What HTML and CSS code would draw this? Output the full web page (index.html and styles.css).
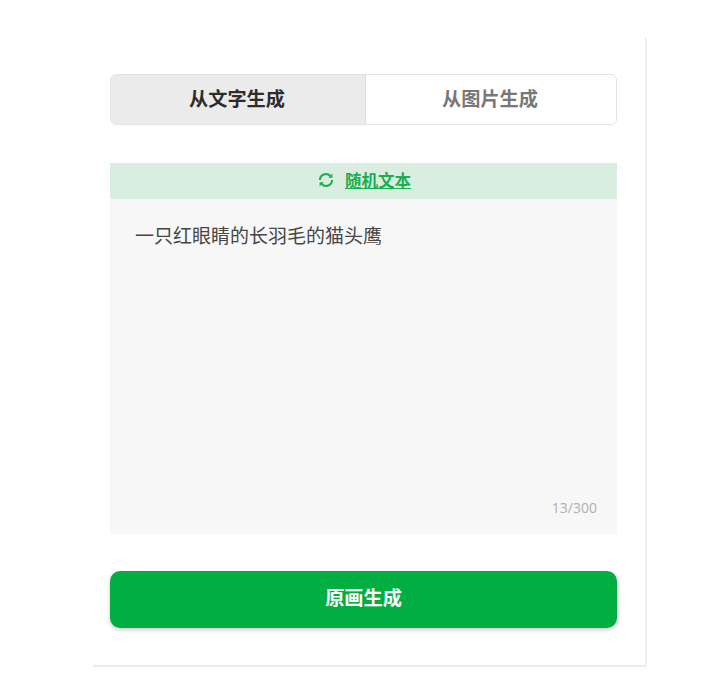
FILE: index.html
```html
<!DOCTYPE html>
<html lang="zh-CN">
<head>
    <meta charset="UTF-8">
    <meta name="viewport" content="width=device-width, initial-scale=1.0">
    <title>原画生成</title>
    <link rel="stylesheet" href="styles.css">
</head>
<body>
    <div class="panel">
        <!-- Source tabs -->
        <div class="tabs">
            <button class="tab tab-active">从文字生成</button>
            <button class="tab">从图片生成</button>
        </div>

        <!-- Prompt box -->
        <div class="prompt">
            <div class="prompt-bar">
                <svg class="refresh-icon" width="16" height="16" viewBox="0 0 16 16" fill="none" stroke="currentColor" stroke-width="2">
                    <path d="M1.9 8a6 6 0 0 1 10.4-4"/>
                    <path d="M14.1 8a6 6 0 0 1-10.4 4"/>
                    <path d="M14.4 1.6v4.2h-4.2z" fill="currentColor" stroke="none"/>
                    <path d="M1.6 14.4v-4.2h4.2z" fill="currentColor" stroke="none"/>
                </svg>
                <a class="random-link" href="#">随机文本</a>
            </div>
            <div class="prompt-body">
                <p class="prompt-text">一只红眼睛的长羽毛的猫头鹰</p>
                <span class="prompt-count">13/300</span>
            </div>
        </div>

        <button class="generate">原画生成</button>
    </div>
</body>
</html>
```

FILE: styles.css
```css
* {
    margin: 0;
    padding: 0;
    box-sizing: border-box;
    font-family: "Open Sans", "Noto Sans CJK SC", sans-serif;
}

body {
    background-color: white;
    min-height: 100vh;
}

.panel {
    width: 554px;
    height: 629px;
    margin: 38px 0 0 93px;
    padding: 36px 28px 0 17px;
    border-right: 2px solid rgb(240, 240, 240);
    border-bottom: 2px solid rgb(235, 235, 235);
}

.tabs {
    display: flex;
    height: 51px;
    border: 1px solid rgb(228, 228, 228);
    border-radius: 6px;
    overflow: hidden;
}

.tab {
    flex: 1;
    padding: 0 2px 4px 0;
    border: none;
    background: white;
    font-size: 19.2px;
    font-weight: 700;
    color: rgb(120, 120, 120);
}

.tab-active {
    flex: none;
    width: 255px;
    background-color: rgb(235, 235, 235);
    color: rgb(45, 45, 45);
    border-right: 1px solid rgb(220, 220, 220);
}

.prompt {
    margin-top: 38px;
    height: 371px;
    display: flex;
    flex-direction: column;
    background-color: rgb(247, 247, 247);
}

.prompt-bar {
    display: flex;
    align-items: center;
    justify-content: center;
    gap: 11px;
    height: 36px;
    padding: 0 0 2px 2px;
    background-color: rgb(217, 238, 224);
    color: rgb(27, 174, 78);
}

.refresh-icon {
    flex-shrink: 0;
}

.random-link {
    font-size: 16.5px;
    font-weight: 700;
    color: rgb(27, 174, 78);
    text-decoration: underline;
}

.prompt-body {
    flex: 1;
    display: flex;
    flex-direction: column;
    justify-content: space-between;
    padding: 23px 20px 17px 25px;
}

.prompt-text {
    font-size: 19px;
    line-height: 28px;
    color: rgb(70, 70, 70);
}

.prompt-count {
    align-self: flex-end;
    font-size: 14px;
    line-height: 18px;
    color: rgb(175, 175, 175);
}

.generate {
    display: block;
    width: 100%;
    height: 57px;
    margin-top: 37px;
    padding-bottom: 5px;
    border: none;
    border-radius: 10px;
    background-color: rgb(0, 174, 66);
    box-shadow: 0 2px 4px rgb(0 0 0 / 0.2);
    color: white;
    font-size: 19.2px;
    font-weight: 700;
}
```
